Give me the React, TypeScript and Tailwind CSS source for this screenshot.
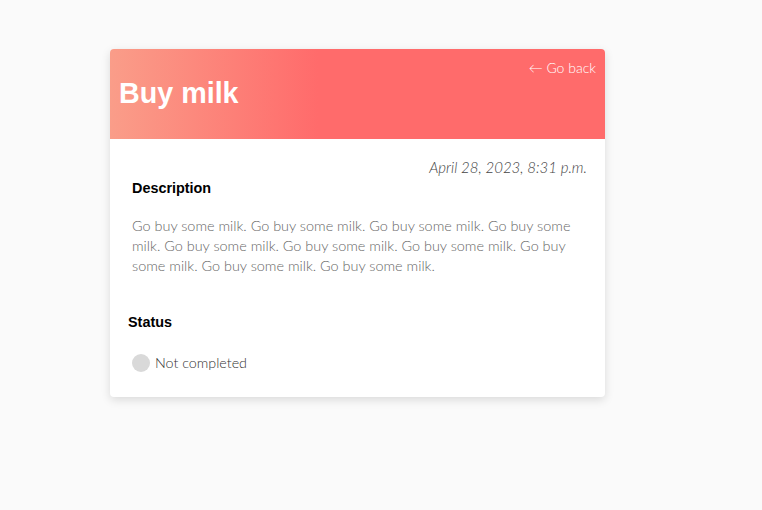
export default function App() {
  return (
    <div className="min-h-[510px] w-full bg-[#fafafa] pt-[49px] pl-[110px]" style={{ fontFamily: "Lato, 'Noto Sans', sans-serif" }}>
      <div className="w-[495px] rounded-[4px] bg-white shadow-[0_3px_10px_rgba(0,0,0,0.13)]">
        <div className="relative h-[90px] rounded-t-[4px] bg-[linear-gradient(90deg,#fa9d89_0%,#ff6b6b_42%,#ff6b6b_100%)]">
          <a className="absolute right-[9px] top-[9px] text-[14px] font-light leading-[20px] text-white">← Go back</a>
          <h1 className="absolute left-[9px] top-[24px] text-[28.7px] font-bold leading-[40px] text-white" style={{ fontFamily: "'Liberation Sans', Arial, sans-serif" }}>Buy milk</h1>
        </div>
        <div className="px-[18px] pb-[24px] pt-[18px]">
          <div className="text-right text-[15px] font-light italic leading-[20px] text-[#444]">April 28, 2023, 8:31 p.m.</div>
          <h2 className="ml-[4px] mt-[2px] text-[14.4px] font-bold leading-[18px] text-black" style={{ fontFamily: "'Liberation Sans', Arial, sans-serif" }}>Description</h2>
          <p className="ml-[4px] mt-[19px] pr-[8px] text-[14.45px] font-light leading-[20px] text-[#666]">
            Go buy some milk. Go buy some milk. Go buy some milk. Go buy some milk. Go buy some milk. Go buy some milk. Go buy some milk. Go buy some milk. Go buy some milk. Go buy some milk.
          </p>
          <h2 className="mt-[37px] text-[14.4px] font-bold leading-[18px] text-black" style={{ fontFamily: "'Liberation Sans', Arial, sans-serif" }}>Status</h2>
          <div className="ml-[4px] mt-[22px] flex items-center gap-[5px]">
            <span className="h-[18px] w-[18px] rounded-full bg-[#d9d9d9]"></span>
            <span className="text-[14.3px] font-light leading-[20px] text-[#333]">Not completed</span>
          </div>
        </div>
      </div>
    </div>
  );
}
